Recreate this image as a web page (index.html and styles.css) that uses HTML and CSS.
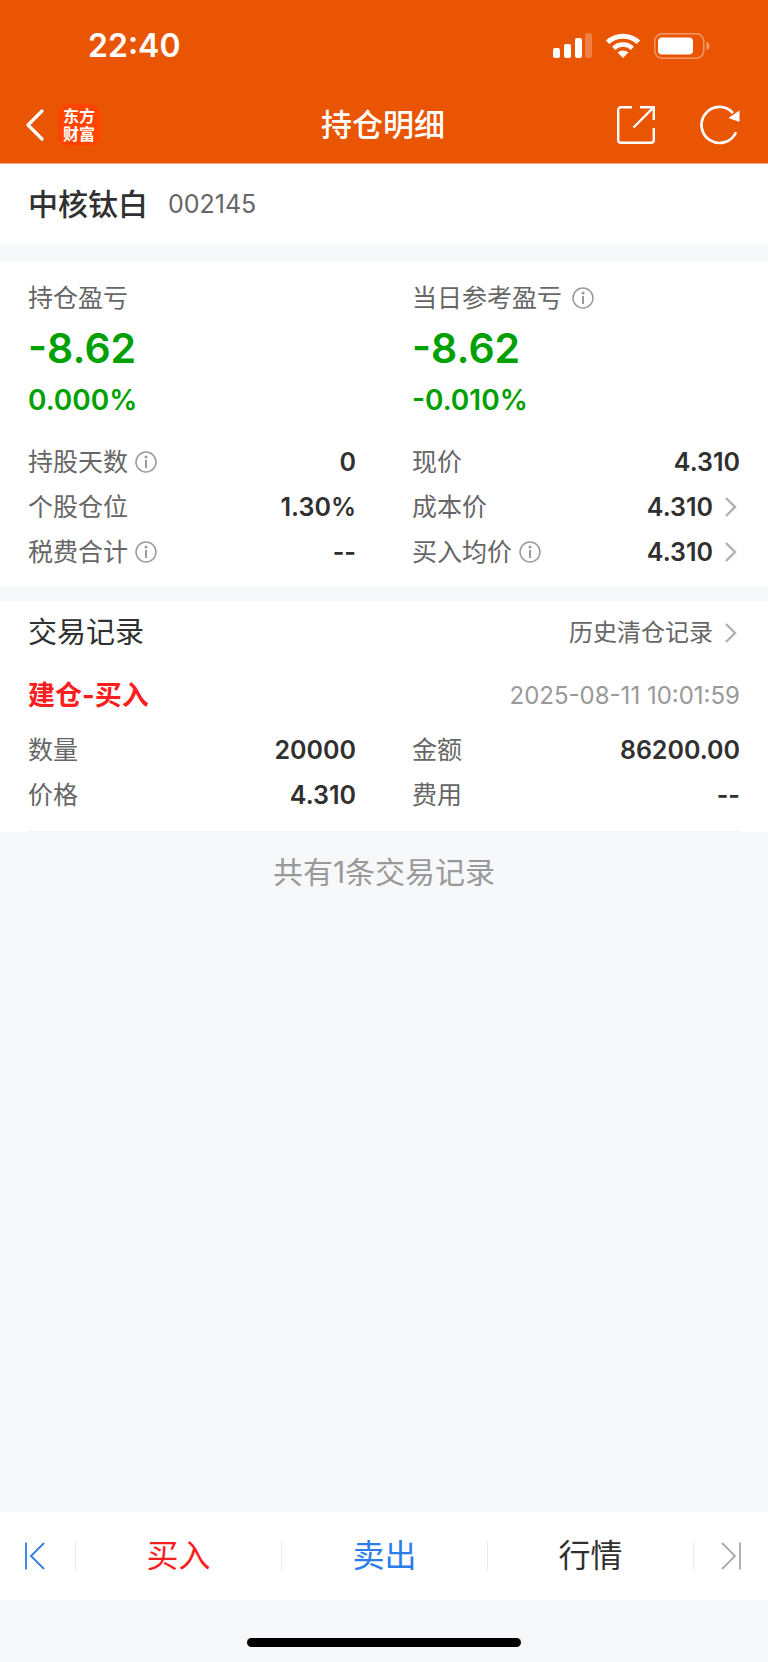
FILE: index.html
```
<!DOCTYPE html>
<html lang="zh-CN">
<head>
    <meta charset="UTF-8">
    <meta name="viewport" content="width=device-width, initial-scale=1.0">
    <title>持仓明细</title>
    <link rel="stylesheet" href="styles.css">
</head>
<body>
    <header>
        <div class="status-bar">
            <span class="time">22:40</span>
            <div class="status-icons">
                <svg width="39" height="26" viewBox="0 0 39 26" fill="#fff">
                    <rect x="0" y="15" width="7" height="10" rx="2"/>
                    <rect x="11" y="11" width="7" height="14" rx="2"/>
                    <rect x="22" y="5" width="7" height="20" rx="2"/>
                    <rect x="32" y="0" width="7" height="25" rx="2" opacity="0.25"/>
                </svg>
                <svg width="36" height="26" viewBox="0 0 36 26" fill="none" stroke="#fff" stroke-width="5">
                    <path d="M2.6 9.3a22.5 22.5 0 0 1 30.8 0"/>
                    <path d="M8.6 15.2a13.9 13.9 0 0 1 18.8 0" stroke-width="4.6"/>
                    <path d="M18 25l-5.4-5.4a8 8 0 0 1 10.8 0z" fill="#fff" stroke="none"/>
                </svg>
                <svg width="56" height="26" viewBox="0 0 56 26">
                    <rect x="0.8" y="0.8" width="49" height="24.4" rx="7.5" fill="none" stroke="#fff" stroke-width="1.5" opacity="0.4"/>
                    <rect x="4" y="4.5" width="35" height="17" rx="4" fill="#fff"/>
                    <path d="M52.5 9c1.8.6 3 2.1 3 4s-1.2 3.4-3 4z" fill="#fff" opacity="0.45"/>
                </svg>
            </div>
        </div>
        <nav class="nav-bar">
            <div class="nav-left">
                <button class="icon-button" aria-label="返回">
                    <svg width="18" height="32" viewBox="0 0 18 32" fill="none" stroke="#fff" stroke-width="3.2" stroke-linecap="round" stroke-linejoin="round">
                        <path d="M16 2L2 16l14 14"/>
                    </svg>
                </button>
                <a class="logo" href="#">东方<br>财富</a>
            </div>
            <h1>持仓明细</h1>
            <div class="nav-right">
                <button class="icon-button" aria-label="分享">
                    <svg width="38" height="38" viewBox="0 0 38 38" fill="none" stroke="#fff" stroke-width="2.4">
                        <path d="M15 1.2H4a2.8 2.8 0 0 0-2.8 2.8v30A2.8 2.8 0 0 0 4 36.8h30a2.8 2.8 0 0 0 2.8-2.8V22"/>
                        <path d="M23 1.2h13.8V14M36.8 1.2L16.500 21.5"/>
                    </svg>
                </button>
                <button class="icon-button" aria-label="刷新">
                    <svg width="40" height="40" viewBox="0 0 40 40" fill="none" stroke="#fff" stroke-width="2.7">
                        <path d="M36 27.2A18 18 0 1 1 33 8"/>
                        <path d="M39.500 5.5v11.500L28.500 13z" fill="#fff" stroke="none"/>
                    </svg>
                </button>
            </div>
        </nav>
    </header>

    <main>
        <section class="stock">
            <h2>中核钛白</h2>
            <span class="stock-code">002145</span>
        </section>

        <section class="position">
            <div class="columns">
                <div class="profit">
                    <p class="label">持仓盈亏</p>
                    <p class="amount">-8.62</p>
                    <p class="percent">0.000%</p>
                </div>
                <div class="profit">
                    <p class="label">当日参考盈亏
                        <button class="info wide" aria-label="说明"><svg width="22" height="22" viewBox="0 0 22 22"><use href="#info"/></svg></button>
                    </p>
                    <p class="amount">-8.62</p>
                    <p class="percent">-0.010%</p>
                </div>
            </div>
            <div class="columns">
                <dl>
                    <div class="row">
                        <dt>持股天数<button class="info" aria-label="说明"><svg width="22" height="22" viewBox="0 0 22 22"><use href="#info"/></svg></button></dt>
                        <dd>0</dd>
                    </div>
                    <div class="row">
                        <dt>个股仓位</dt>
                        <dd>1.30%</dd>
                    </div>
                    <div class="row">
                        <dt>税费合计<button class="info" aria-label="说明"><svg width="22" height="22" viewBox="0 0 22 22"><use href="#info"/></svg></button></dt>
                        <dd>--</dd>
                    </div>
                </dl>
                <dl>
                    <div class="row">
                        <dt>现价</dt>
                        <dd>4.310</dd>
                    </div>
                    <div class="row">
                        <dt>成本价</dt>
                        <dd><a class="more" href="#">4.310<svg width="12" height="20" viewBox="0 0 12 20"><use href="#chevron"/></svg></a></dd>
                    </div>
                    <div class="row">
                        <dt>买入均价<button class="info" aria-label="说明"><svg width="22" height="22" viewBox="0 0 22 22"><use href="#info"/></svg></button></dt>
                        <dd><a class="more" href="#">4.310<svg width="12" height="20" viewBox="0 0 12 20"><use href="#chevron"/></svg></a></dd>
                    </div>
                </dl>
            </div>
        </section>

        <section class="records">
            <div class="records-head">
                <h3>交易记录</h3>
                <a class="more history" href="#">历史清仓记录<svg width="12" height="20" viewBox="0 0 12 20"><use href="#chevron"/></svg></a>
            </div>
            <article class="record">
                <div class="record-head">
                    <h4>建仓-买入</h4>
                    <time>2025-08-11 10:01:59</time>
                </div>
                <div class="columns">
                    <dl>
                        <div class="row"><dt>数量</dt><dd>20000</dd></div>
                        <div class="row"><dt>价格</dt><dd>4.310</dd></div>
                    </dl>
                    <dl>
                        <div class="row"><dt>金额</dt><dd>86200.00</dd></div>
                        <div class="row"><dt>费用</dt><dd>--</dd></div>
                    </dl>
                </div>
            </article>
        </section>
        <p class="total">共有1条交易记录</p>
    </main>

    <footer>
        <div class="toolbar">
            <button class="first" aria-label="上一只">
                <svg width="20" height="28" viewBox="0 0 20 28" fill="none" stroke="currentColor" stroke-width="1.8">
                    <path d="M1 0.5v27M19 1L6 14l13 13"/>
                </svg>
            </button>
            <button class="buy">买入</button>
            <button class="sell">卖出</button>
            <button class="quote">行情</button>
            <button class="last" aria-label="下一只">
                <svg width="20" height="28" viewBox="0 0 20 28" fill="none" stroke="currentColor" stroke-width="1.8">
                    <path d="M19 0.5v27M1 1l13 13L1 27"/>
                </svg>
            </button>
        </div>
        <div class="home-area"><div class="home-indicator"></div></div>
    </footer>

    <!-- Shared icons -->
    <svg class="sprite" width="0" height="0">
        <symbol id="info" viewBox="0 0 22 22">
            <circle cx="11" cy="11" r="10" fill="none" stroke="#999" stroke-width="1.5"/>
            <circle cx="11" cy="6" r="1.5" fill="#999"/>
            <path d="M11 9v8" stroke="#999" stroke-width="2"/>
        </symbol>
        <symbol id="chevron" viewBox="0 0 12 20">
            <path d="M1 1l9 9-9 9" fill="none" stroke="#b0b0b0" stroke-width="2.4"/>
        </symbol>
    </svg>
</body>
</html>
```

FILE: styles.css
```
* {
    margin: 0;
    padding: 0;
    box-sizing: border-box;
}

body {
    min-height: 100vh;
    display: flex;
    flex-direction: column;
    background-color: #f6f8fa;
    color: #303030;
    font-family: Inter, "Noto Sans CJK SC", sans-serif;
    font-size: 25px;
    line-height: 36px;
}

button {
    background: none;
    border: none;
    font: inherit;
    color: inherit;
    cursor: pointer;
}

a {
    color: inherit;
    text-decoration: none;
}

svg {
    display: block;
    flex-shrink: 0;
}

.sprite {
    position: absolute;
}

/* Header */
header {
    background-color: #ea5503;
    border-bottom: 1px solid #f3a57c;
    color: #fff;
}

.status-bar {
    display: flex;
    justify-content: space-between;
    align-items: center;
    height: 86px;
    padding: 6px 58px 0 88px;
}

.time {
    font-size: 32px;
    font-weight: 600;
}

.status-icons {
    display: flex;
    gap: 13px;
}

.nav-bar {
    display: grid;
    grid-template-columns: 1fr auto 1fr;
    align-items: center;
    height: 77px;
    padding: 0 28px 0 26px;
}

.nav-left, .nav-right {
    display: flex;
    align-items: center;
}

.nav-left {
    gap: 14px;
}

.nav-right {
    justify-content: flex-end;
    gap: 45px;
}

.logo {
    width: 42px;
    height: 42px;
    padding-top: 3px;
    border-radius: 10px;
    background-color: #ff4400;
    font-size: 16px;
    font-weight: 700;
    line-height: 18px;
    text-align: center;
}

h1 {
    font-size: 31px;
    font-weight: 500;
    line-height: 40px;
}

/* Stock name */
.stock {
    display: flex;
    align-items: center;
    gap: 20px;
    height: 80px;
    padding: 0 28px;
    background-color: #fff;
}

.stock h2 {
    font-size: 30px;
    font-weight: 500;
}

.stock-code {
    color: #666;
}

/* Position */
.position {
    margin-top: 18px;
    padding: 18px 28px 13px;
    background-color: #fff;
}

.columns {
    display: grid;
    grid-template-columns: 1fr 1fr;
    column-gap: 56px;
}

.profit {
    padding-bottom: 18px;
    color: #00a000;
}

.label {
    display: flex;
    align-items: center;
    height: 36px;
    color: #666;
}

.amount {
    font-size: 41px;
    font-weight: 600;
    line-height: 64px;
}

.percent {
    font-size: 28px;
    font-weight: 600;
    line-height: 41px;
}

.row {
    display: flex;
    justify-content: space-between;
    align-items: center;
    height: 45px;
}

dt {
    display: flex;
    align-items: center;
    color: #666;
}

dd {
    font-weight: 600;
}

.info {
    margin-left: 7px;
}

.info.wide {
    margin-left: 10px;
}

.more {
    display: flex;
    align-items: center;
    gap: 12px;
    padding-right: 3px;
}

/* Records */
.records {
    margin-top: 14px;
    background-color: #fff;
}

.records-head, .record-head {
    display: flex;
    justify-content: space-between;
    align-items: center;
}

.records-head {
    height: 64px;
    padding: 0 28px;
}

h3 {
    font-size: 29px;
    font-weight: 400;
}

.history {
    color: #666;
    font-size: 24px;
}

.record {
    margin: 0 28px;
    padding-bottom: 14px;
    border-bottom: 1px solid #f2f3f5;
}

.record-head {
    height: 62px;
}

h4 {
    color: #fa1e1e;
    font-size: 27px;
    font-weight: 700;
}

time {
    color: #999;
    font-size: 24px;
}

.total {
    padding: 19px 0;
    color: #999;
    font-size: 30px;
    line-height: 42px;
    text-align: center;
}

/* Bottom bar */
footer {
    margin-top: auto;
}

.toolbar {
    display: grid;
    grid-template-columns: 75px 1fr 1fr 1fr 75px;
    align-items: center;
    height: 88px;
    background-color: #fff;
}

.toolbar button {
    display: flex;
    justify-content: center;
    align-items: center;
    height: 30px;
    border-left: 1px solid #ececec;
    font-size: 32px;
}

.toolbar .first {
    border-left: none;
    padding-right: 6px;
    color: #2b7de9;
}

.toolbar .last {
    color: #aaa;
}

.buy {
    color: #fa1e1e;
}

.sell {
    color: #2b7de9;
}

.home-area {
    display: flex;
    justify-content: center;
    height: 62px;
    padding-top: 38px;
}

.home-indicator {
    width: 274px;
    height: 9px;
    border-radius: 5px;
    background-color: #000;
}
```
